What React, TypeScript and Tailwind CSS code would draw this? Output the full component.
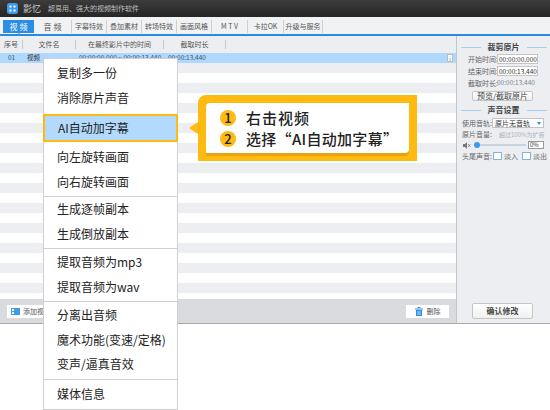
import React from "react";

const font = { fontFamily: '"Noto Sans CJK SC", "Liberation Sans", sans-serif' };

const tabs = [
  { label: "音 频", w: "w-[38px]", size: "text-[8px]" },
  { label: "字幕特效", w: "w-[35px]", size: "text-[7px]" },
  { label: "叠加素材", w: "w-[35px]", size: "text-[7px]" },
  { label: "转场特效", w: "w-[35px]", size: "text-[7px]" },
  { label: "画面风格", w: "w-[35px]", size: "text-[7px]" },
  { label: "M T V", w: "w-[36px]", size: "text-[7px]" },
  { label: "卡拉OK", w: "w-[36px]", size: "text-[7px]" },
  { label: "升级与服务", w: "w-[39px]", size: "text-[7px]" },
];

const menuGroups = [
  { cls: "pt-[2px] pb-[4px]", items: ["复制多一份", "消除原片声音"] },
  { cls: "pt-[3px] pb-[2px]", items: ["向左旋转画面", "向右旋转画面"] },
  { cls: "pb-[2px] border-t border-[#cfcfcf]", items: ["生成逐帧副本", "生成倒放副本"] },
  { cls: "pt-px pb-[2px] border-t border-[#cfcfcf]", items: ["提取音频为mp3", "提取音频为wav"] },
  { cls: "pt-px pb-[2px] border-t border-[#cfcfcf]", items: ["分离出音频", "魔术功能(变速/定格)", "变声/逼真音效"] },
  { cls: "pt-[2px] border-t border-[#cfcfcf]", items: ["媒体信息"] },
];

const SectionTitle = ({ text }: { text: string }) => (
  <div className="flex items-center justify-center gap-[7px] h-[10px]">
    <div className="w-[20px] h-px bg-[#a9cdf0]" />
    <span className="text-[8px] font-bold text-[#444]">{text}</span>
    <div className="w-[20px] h-px bg-[#a9cdf0]" />
  </div>
);

const TimeField = ({ label, value }: { label: string; value: string }) => (
  <div className="flex items-center h-[10px] pl-[11px]">
    <span className="w-[29px] text-[7px] text-[#666] whitespace-nowrap">{label}</span>
    <div className="w-[41px] h-[10px] border border-[#c4c4c4] bg-white text-[6.5px] leading-[8px] pl-[1px] text-[#333] whitespace-nowrap overflow-hidden">
      {value}
    </div>
  </div>
);

const PanelButton = ({ text, bold }: { text: string; bold?: boolean }) => (
  <div
    className={`ml-[15px] w-[61px] flex items-center justify-center border border-[#c6c6c6] rounded-[2px] bg-gradient-to-b from-white to-[#f0f0f0] text-[8px] text-[#444] ${
      bold ? "h-[16px] font-bold" : "h-[10px]"
    }`}
  >
    {text}
  </div>
);

export default function App() {
  return (
    <div className="relative w-[550px] h-[410px] bg-white overflow-hidden" style={font}>
      <div className="w-[550px] h-[324px] flex flex-col border-b border-[#a8a8a8]">
        {/* title bar */}
        <div className="h-[17px] flex items-center pl-[7px] bg-gradient-to-b from-[#3c3c3c] to-[#262626]">
          <svg width="11" height="11" viewBox="0 0 11 11">
            <rect width="11" height="11" rx="2.5" fill="#3f9be8" />
            <circle cx="3.5" cy="3.5" r="1.2" fill="#dff0ff" />
            <circle cx="7.5" cy="3.5" r="1.2" fill="#dff0ff" />
            <circle cx="3.5" cy="7.5" r="1.2" fill="#dff0ff" />
            <circle cx="7.5" cy="7.5" r="1.2" fill="#dff0ff" />
          </svg>
          <span className="ml-[5px] text-[9px] text-[#c8c8c8] w-[25px]">影忆</span>
          <span className="text-[7px] text-[#bdbdbd]">超易用、强大的视频制作软件</span>
        </div>

        {/* tabs */}
        <div className="relative h-[19px] flex items-center pl-[3px] pt-[2px] bg-[#f1f2f4] border-b-2 border-[#2b8ae0]">
          <div className="w-[31px] h-[13px] flex items-center justify-center bg-[#2b8de6] text-[8px] text-white">
            视 频
          </div>
          {tabs.map((t) => (
            <div
              key={t.label}
              className={`${t.w} ${t.size} h-[13px] flex items-center justify-center border-r border-[#cfcfcf] text-[#555] whitespace-nowrap`}
            >
              {t.label}
            </div>
          ))}
          <div className="absolute left-[17px] top-[15px] w-0 h-0 border-x-[2px] border-x-transparent border-t-[2px] border-t-[#2b8de6]" />
        </div>

        <div className="flex-1 flex min-h-0">
          {/* list */}
          <div className="w-[456px] flex flex-col min-w-0">
            <div className="h-[17px] flex items-center bg-[#eceef1] text-[7px] text-[#555]">
              <div className="w-[23px] h-[9px] flex items-center justify-center border-r border-[#c8c8c8]">序号</div>
              <div className="w-[53px] h-[9px] flex items-center justify-center border-r border-[#c8c8c8]">文件名</div>
              <div className="w-[88px] h-[9px] flex items-center justify-center border-r border-[#c8c8c8]">在最终影片中的时间</div>
              <div className="w-[62px] h-[9px] flex items-center justify-center border-r border-[#c8c8c8]">截取时长</div>
            </div>
            <div className="flex-1 min-h-0 overflow-hidden">
              <div className="relative h-[10px] flex items-center bg-[#aed8fd] text-[6.5px] text-[#456]">
                <span className="w-[27px] pl-[8px]">01</span>
                <span className="w-[52px] text-[#333]">视频</span>
                <span className="w-[89px] whitespace-nowrap">00:00:00.000 ~ 00:00:13.440</span>
                <span className="whitespace-nowrap">00:00:13.440</span>
                <div className="absolute right-[3px] top-[1px] w-[6px] h-[8px] bg-white border border-[#bbb] flex items-center justify-center text-[5px] leading-none">
                  i
                </div>
              </div>
              {Array.from({ length: 24 }).map((_, i) => (
                <div key={i} className={`h-[10px] ${i % 2 === 0 ? "bg-[#edeef1]" : "bg-white"}`} />
              ))}
            </div>
            <div className="h-[24px] flex items-center justify-between px-[7px] bg-[#d9dbdf]">
              <div className="w-[60px] h-[13px] flex items-center pl-[4px] gap-[3px] bg-white text-[7px] text-[#555]">
                <svg width="9" height="7" viewBox="0 0 9 7">
                  <rect width="9" height="7" fill="#3f9be8" />
                  <rect x="1" y="1" width="2" height="2" fill="#fff" />
                  <rect x="1" y="4" width="2" height="2" fill="#fff" />
                </svg>
                添加视频
              </div>
              <div className="w-[43px] h-[13px] flex items-center justify-center gap-[4px] bg-white text-[7px] text-[#555]">
                <svg width="8" height="9" viewBox="0 0 8 9">
                  <path d="M0 1.5h8v1H0zM2.5 0h3v1h-3zM1 3h6v6H1z" fill="#2b8de6" />
                  <path d="M3 4v4M5 4v4" stroke="#fff" strokeWidth="0.7" />
                </svg>
                删除
              </div>
            </div>
          </div>

          {/* settings panel */}
          <div className="flex-1 flex flex-col pt-[6px] pb-[4px] bg-[#eceef1] border-l border-[#c4c4c4]">
            <SectionTitle text="裁剪原片" />
            <div className="mt-[2px] flex flex-col gap-[2px]">
              <TimeField label="开始时间:" value="00:00:00.000" />
              <TimeField label="结束时间:" value="00:00:13.440" />
            </div>
            <div className="flex items-center h-[10px] mt-[2px] pl-[11px]">
              <span className="w-[29px] text-[7px] text-[#666] whitespace-nowrap">截取时长:</span>
              <span className="text-[6.5px] text-[#7b8794] whitespace-nowrap">00:00:13.440</span>
            </div>
            <div className="mt-[3px]">
              <PanelButton text="预览/截取原片" />
            </div>
            <div className="mt-[4px]">
              <SectionTitle text="声音设置" />
            </div>
            <div className="flex items-center h-[10px] mt-[3px] pl-[5px]">
              <span className="w-[30px] text-[7px] text-[#666] whitespace-nowrap">使用音轨:</span>
              <div className="w-[52px] h-[10px] flex items-center justify-between px-[2px] border border-[#c4c4c4] bg-white text-[7px] text-[#333] whitespace-nowrap">
                原片无音轨
                <span className="w-0 h-0 border-x-[2px] border-x-transparent border-t-[3px] border-t-[#2b8de6]" />
              </div>
            </div>
            <div className="flex items-center h-[10px] mt-px pl-[5px]">
              <span className="w-[37px] text-[7px] text-[#666] whitespace-nowrap">原片音量:</span>
              <span className="text-[6px] text-[#aab2bb] whitespace-nowrap">超过100%为扩音</span>
            </div>
            <div className="flex items-center h-[8px] mt-[2px] pl-[6px]">
              <svg width="8" height="7" viewBox="0 0 8 7">
                <path d="M0 2h2l2-2v7L2 5H0z" fill="#777" />
                <path d="M5 2l2.5 3M7.5 2L5 5" stroke="#777" strokeWidth="0.7" />
              </svg>
              <div className="relative w-[52px] h-[2px] ml-[3px] bg-[#c9d3dd]">
                <div className="absolute -top-[2px] left-0 w-[6px] h-[6px] rounded-full bg-[#3f9be8]" />
              </div>
              <div className="w-[16px] h-[8px] ml-[2px] border border-[#999] bg-white text-[6px] leading-[6px] pl-[1px] text-[#333]">
                0%
              </div>
            </div>
            <div className="flex items-center h-[10px] mt-[2px] pl-[5px] text-[7px] text-[#666] whitespace-nowrap">
              <span className="w-[31px]">头尾声音:</span>
              <div className="w-[9px] h-[8px] border border-[#7fb4e4] bg-white" />
              <span className="ml-[2px] w-[18px]">淡入</span>
              <div className="w-[9px] h-[8px] border border-[#7fb4e4] bg-white" />
              <span className="ml-[2px]">淡出</span>
            </div>
            <div className="mt-auto">
              <PanelButton text="确认修改" bold />
            </div>
          </div>
        </div>
      </div>

      {/* context menu */}
      <div className="absolute left-[43px] top-[58px] w-[135px] h-[352px] bg-white border border-[#cfcfcf] text-[12px] text-[#222]">
        {menuGroups.map((group, g) => (
          <React.Fragment key={g}>
            {g === 1 && (
              <div className="h-[28px] -mx-px flex items-center pl-[13px] bg-[#b3dafc] border-2 border-[#fdbb12]">
                AI自动加字幕
              </div>
            )}
            <div className={group.cls}>
              {group.items.map((item) => (
                <div key={item} className="h-[24.5px] flex items-center pl-[13px] whitespace-nowrap">
                  {item}
                </div>
              ))}
            </div>
          </React.Fragment>
        ))}
      </div>

      {/* callout */}
      <div className="absolute left-[189px] top-[95px] flex items-center">
        <div className="w-0 h-0 border-y-[6px] border-y-transparent border-r-[9px] border-r-[#fdbb12]" />
        <div className="w-[219px] h-[66px] p-[8px] rounded-tl-[8px] bg-[#fdbb12]">
          <div className="h-[50px] flex flex-col justify-center gap-[1px] pl-[14px] rounded-tl-[4px] rounded-br-[4px] bg-white shadow-[0_3px_0_#e8a30f] text-[15px] font-medium text-[#222] leading-[20px]">
            <div className="flex items-center">
              <span className="w-[16px] h-[16px] mr-[10px] flex items-center justify-center rounded-full bg-[#fdbb12] text-[13px]">1</span>
              <span className="tracking-[1px]">右击视频</span>
            </div>
            <div className="flex items-center">
              <span className="w-[16px] h-[16px] mr-[10px] flex items-center justify-center rounded-full bg-[#fdbb12] text-[13px]">2</span>
              <span className="whitespace-nowrap tracking-[0.3px]">选择“AI自动加字幕”</span>
            </div>
          </div>
        </div>
      </div>
    </div>
  );
}
